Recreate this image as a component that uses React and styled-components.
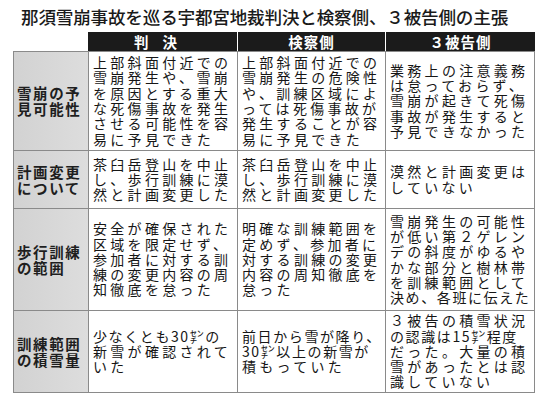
import React from "react";
import styled, { createGlobalStyle } from "styled-components";

const GlobalStyle = createGlobalStyle`
  body {
    margin: 0;
    background: #ffffff;
    font-family: "Noto Sans CJK JP", "Noto Sans", sans-serif;
    color: #1d1d1d;
  }
`;

const Page = styled.div`
  width: 542px;
  height: 400px;
  overflow: hidden;
  background: #ffffff;
`;

const Title = styled.h1`
  margin: 0;
  padding: 5px 0 0 21px;
  height: 27px;
  font-size: 17.6px;
  line-height: 24px;
  font-weight: 500;
  letter-spacing: -0.2px;
  color: #1a1a1a;
  white-space: nowrap;
`;

const Table = styled.div`
  margin-left: 13px;
  width: 522px;
  display: grid;
  grid-template-columns: 75px 149px 148px 150px;
  grid-template-rows: 19px 99px 58px 102px 83px;
`;

const Corner = styled.div`
  background: #ffffff;
`;

const HeadCell = styled.div`
  background: #1b1b1b;
  color: #ffffff;
  display: flex;
  align-items: center;
  justify-content: center;
  font-size: 14.5px;
  line-height: 19px;
  font-weight: 700;
  letter-spacing: ${(p) => p.$spread || "1px"};
  border-left: ${(p) => (p.$first ? "none" : "1px solid #ffffff")};
`;

const LabelCell = styled.div`
  background: linear-gradient(90deg, #d2d2d2, #dddddd);
  border-left: 1px solid #8a8a8a;
  border-top: 1px solid #8a8a8a;
  border-bottom: ${(p) => (p.$last ? "1px solid #8a8a8a" : "none")};
  display: flex;
  flex-direction: column;
  justify-content: center;
  padding-left: 3px;
  font-size: 14.5px;
  line-height: 16px;
  font-weight: 700;
  letter-spacing: 1.6px;
  color: #1e1e1e;
  white-space: nowrap;
  overflow: hidden;
`;

const TextCell = styled.div`
  border-left: 1px solid #8a8a8a;
  border-top: 1px solid #8a8a8a;
  border-right: ${(p) => (p.$end ? "1px solid #8a8a8a" : "none")};
  border-bottom: ${(p) => (p.$last ? "1px solid #8a8a8a" : "none")};
  display: flex;
  flex-direction: column;
  justify-content: center;
  padding-left: 4px;
  font-size: 14px;
  line-height: 15.3px;
  font-weight: 400;
  letter-spacing: 3.3px;
  color: #161616;
  white-space: nowrap;
  overflow: hidden;
`;

const Line = styled.span`
  display: block;
  letter-spacing: ${(p) => (p.$tight ? "1.6px" : "inherit")};
`;

const rows = [
  {
    label: ["雪崩の予", "見可能性"],
    cells: [
      [
        "上部斜面付近での",
        "雪崩発生や、雪崩",
        "を原因とする重大",
        "な死傷事故を発生",
        "させる可能性を容",
        "易に予見できた",
      ],
      [
        "上部斜面付近での",
        "雪崩発生の危険性",
        "や、訓練区域によ",
        "っては死傷事故が",
        "発生することが容",
        "易に予見できた",
      ],
      [
        "業務上の注意義務",
        "は怠っておらず、",
        "雪崩が起きて死傷",
        "事故が発生すると",
        "予見できなかった",
      ],
    ],
  },
  {
    label: ["計画変更", "について"],
    cells: [
      ["茶臼岳登山を中止", "し、歩行訓練に漠", "然と計画変更した"],
      ["茶臼岳登山を中止", "し、歩行訓練に漠", "然と計画変更した"],
      ["漠然と計画変更は", "していない"],
    ],
  },
  {
    label: ["歩行訓練", "の範囲"],
    cells: [
      [
        "安全が確保された",
        "区域を限定せず、",
        "参加者に対する訓",
        "練の変更内容の周",
        "知徹底を怠った",
      ],
      [
        "明確な訓練範囲を",
        "定めず、参加者に",
        "対する訓練の変更",
        "内容の周知徹底を",
        "怠った",
      ],
      [
        "雪崩発生の可能性",
        "が低い第２ゲレン",
        "デの斜度がゆるや",
        "かな部分と樹林帯",
        "を訓練範囲として",
        "決め、各班に伝えた",
      ],
    ],
  },
  {
    label: ["訓練範囲", "の積雪量"],
    cells: [
      ["少なくとも30㌢の", "新雪が確認されて", "いた"],
      ["前日から雪が降り、", "30㌢以上の新雪が", "積もっていた"],
      [
        "３被告の積雪状況",
        "の認識は15㌢程度",
        "だった。大量の積",
        "雪があったとは認",
        "識していない",
      ],
    ],
  },
];

const App = () => {
  return (
    <Page>
      <GlobalStyle />
      <Title>那須雪崩事故を巡る宇都宮地裁判決と検察側、３被告側の主張</Title>
      <Table>
        <Corner />
        <HeadCell $first $spread="14px">
          判決
        </HeadCell>
        <HeadCell>検察側</HeadCell>
        <HeadCell>３被告側</HeadCell>
        {rows.map((row, i) => {
          const last = i === rows.length - 1;
          return (
            <React.Fragment key={i}>
              <LabelCell $last={last}>
                {row.label.map((l) => (
                  <Line key={l}>{l}</Line>
                ))}
              </LabelCell>
              {row.cells.map((lines, j) => (
                <TextCell key={j} $last={last} $end={j === 2}>
                  {lines.map((l, k) => (
                    <Line key={k} $tight={l.length > 8}>
                      {l}
                    </Line>
                  ))}
                </TextCell>
              ))}
            </React.Fragment>
          );
        })}
      </Table>
    </Page>
  );
};

export default App;
